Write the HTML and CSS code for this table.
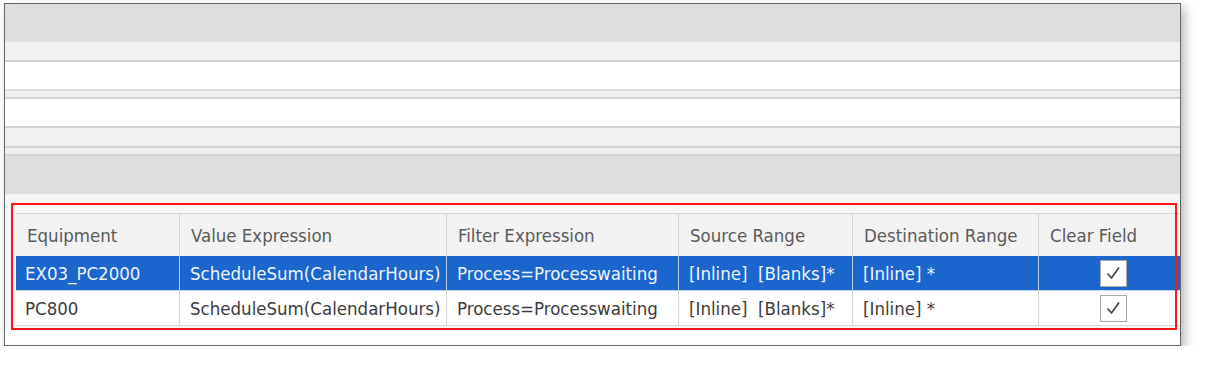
FILE: index.html
```html
<!DOCTYPE html>
<html>
<head>
<meta charset="utf-8">
<link rel="stylesheet" href="styles.css">
</head>
<body>
<div class="page">
  <div class="window">
    <div class="band bar"></div>
    <div class="band strip"></div>
    <div class="band line"></div>
    <div class="band field"></div>
    <div class="band line light"></div>
    <div class="band gap"></div>
    <div class="band line"></div>
    <div class="band field"></div>
    <div class="band line"></div>
    <div class="band strip"></div>
    <div class="band line"></div>
    <div class="band gap"></div>
    <div class="band line"></div>
    <div class="band bar"></div>
    <div class="grid-area">
      <div class="grid">
        <div class="row head">
          <div class="cell">Equipment</div>
          <div class="cell">Value Expression</div>
          <div class="cell">Filter Expression</div>
          <div class="cell">Source Range</div>
          <div class="cell">Destination Range</div>
          <div class="cell">Clear Field</div>
        </div>
        <div class="row selected">
          <div class="cell first">EX03_PC2000</div>
          <div class="cell">ScheduleSum(CalendarHours)</div>
          <div class="cell">Process=Processwaiting</div>
          <div class="cell">[Inline]&nbsp; [Blanks]*</div>
          <div class="cell">[Inline] *</div>
          <div class="cell center"><span class="check"><svg width="27" height="27" viewBox="0 0 27 27"><path d="M7.5 13.5 L11.5 18 L19 7.5" fill="none" stroke="#444" stroke-width="1.7"/></svg></span></div>
        </div>
        <div class="row">
          <div class="cell first">PC800</div>
          <div class="cell">ScheduleSum(CalendarHours)</div>
          <div class="cell">Process=Processwaiting</div>
          <div class="cell">[Inline]&nbsp; [Blanks]*</div>
          <div class="cell">[Inline] *</div>
          <div class="cell center"><span class="check"><svg width="27" height="27" viewBox="0 0 27 27"><path d="M7.5 13.5 L11.5 18 L19 7.5" fill="none" stroke="#444" stroke-width="1.7"/></svg></span></div>
        </div>
      </div>
      <div class="highlight"></div>
    </div>
    <div class="footer"></div>
  </div>
</div>
</body>
</html>
```

FILE: styles.css
```css
html, body {
  margin: 0;
  padding: 0;
  background: #ffffff;
}

.page {
  padding: 3px 0 0 4px;
}

.window {
  width: 1175px;
  border: 1px solid #666666;
  background: #ffffff;
  box-shadow: 4px 5px 10px rgba(0, 0, 0, 0.28);
  display: flex;
  flex-direction: column;
}

.band { flex: none; }
.bar { height: 38px; background: #dedede; }
.strip { height: 18px; background: #f1f1f1; }
.line { height: 2px; background: #d2d2d2; }
.line.light { background: #dcdcdc; }
.field { height: 27px; background: #ffffff; }
.gap { height: 6px; background: #efefef; }

.grid-area {
  position: relative;
  background: #f6f6f6;
  padding: 19px 0 4px 11px;
}

.grid {
  border-top: 1px solid #d6d6d6;
  font-family: "DejaVu Sans Condensed", "DejaVu Sans", sans-serif;
  font-stretch: condensed;
  font-size: 18.5px;
  color: #3c3c3c;
}

.row {
  display: grid;
  grid-template-columns: 164px 267px 232px 174px 186px 141px;
  height: 34px;
  background: #ffffff;
  border-bottom: 1px solid #dadada;
}

.row.head {
  height: 42px;
  background: #f2f2f2;
  color: #5a5a5a;
  border-bottom: none;
}

.cell {
  display: flex;
  align-items: center;
  padding-left: 10px;
  border-right: 1px solid #d6d6d6;
  white-space: nowrap;
  overflow: hidden;
}

.row.head .cell { padding-left: 11px; }
.cell:last-child { border-right: none; }
.cell.first { padding-left: 9px; }
.cell.center { justify-content: center; padding-left: 8px; }

.row.selected {
  background: #1a66cc;
  color: #eef3fb;
  border-bottom-color: #c4d4ea;
}
.row.selected .cell { border-right-color: #b9cdea; }
.row.selected .cell:last-child { border-right: none; }

.check {
  display: block;
  width: 27px;
  height: 27px;
  box-sizing: border-box;
  border: 1px solid #a8a8a8;
  background: #ffffff;
  position: relative;
}
.check svg {
  position: absolute;
  left: -1px;
  top: -1px;
}

.highlight {
  position: absolute;
  left: 6px;
  top: 9px;
  width: 1166px;
  height: 127px;
  box-sizing: border-box;
  border: 2px solid #ff1418;
  pointer-events: none;
}

.footer {
  height: 15px;
  background: #ffffff;
}
```
